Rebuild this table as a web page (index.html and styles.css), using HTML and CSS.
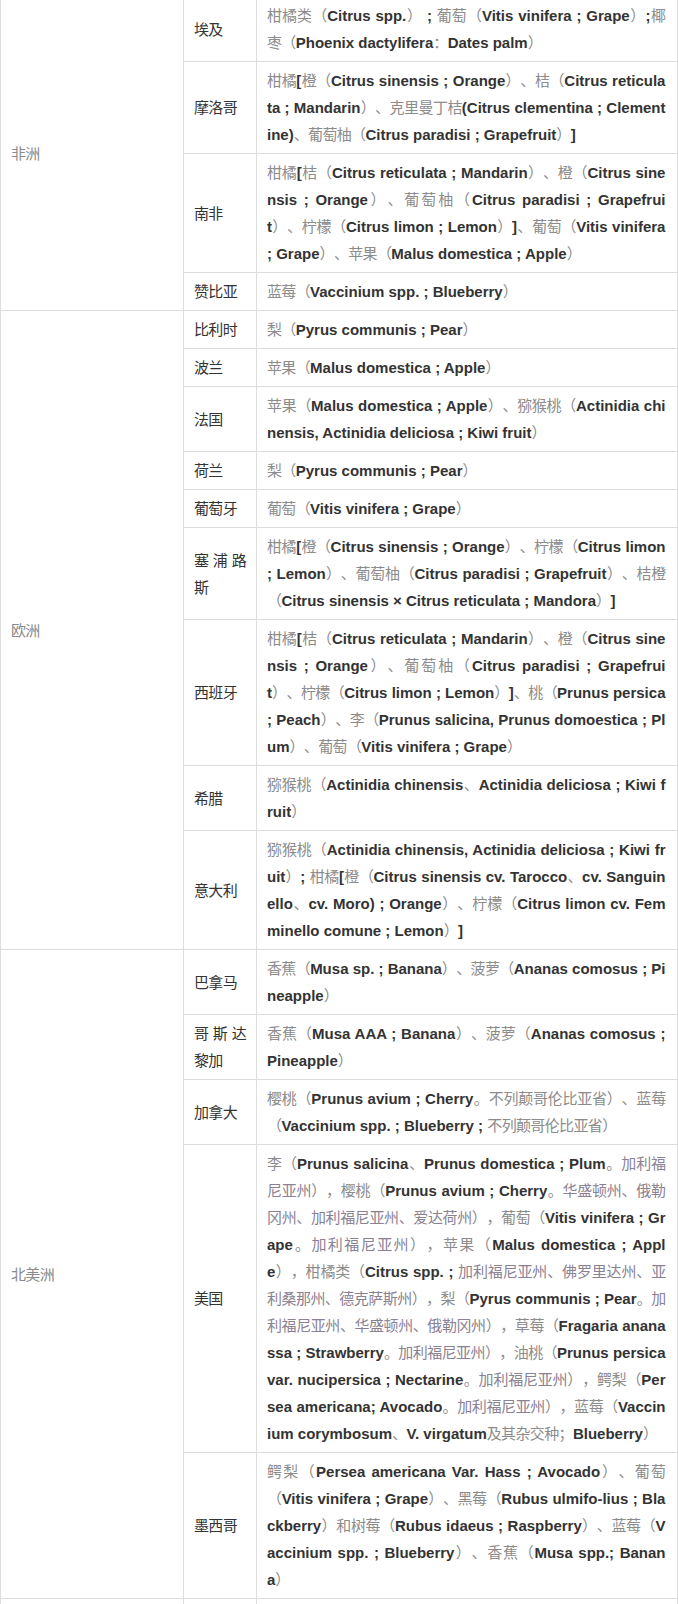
FILE: index.html
```html
<!DOCTYPE html>
<html lang="zh-CN">
<head>
<meta charset="utf-8">
<title>水果输华国家</title>
<link rel="stylesheet" href="styles.css">
</head>
<body>
<table class="fruit-table">
  <colgroup>
    <col class="col-continent">
    <col class="col-country">
    <col class="col-fruit">
  </colgroup>
  <tbody>
    <tr>
      <td class="continent" rowspan="4">非洲</td>
      <td class="country">埃及</td>
      <td class="fruit">柑橘类（<b>Citrus spp.</b>）<b> ; </b>葡萄（<b>Vitis vinifera ; Grape</b>）<b>;</b>椰枣（<b>Phoenix dactylifera</b>：<b>Dates palm</b>）</td>
    </tr>
    <tr>
      <td class="country">摩洛哥</td>
      <td class="fruit">柑橘<b>[</b>橙（<b>Citrus sinensis ; Orange</b>）、桔（<b>Citrus reticulata ; Mandarin</b>）、克里曼丁桔<b>(Citrus clementina ; Clementine)</b>、葡萄柚（<b>Citrus paradisi ; Grapefruit</b>）<b>]</b></td>
    </tr>
    <tr>
      <td class="country">南非</td>
      <td class="fruit">柑橘<b>[</b>桔（<b>Citrus reticulata ; Mandarin</b>）、橙（<b>Citrus sinensis ; Orange</b>）、葡萄柚（<b>Citrus paradisi ; Grapefruit</b>）、柠檬（<b>Citrus limon ; Lemon</b>）<b>]</b>、葡萄（<b>Vitis vinifera ; Grape</b>）、苹果（<b>Malus domestica ; Apple</b>）</td>
    </tr>
    <tr>
      <td class="country">赞比亚</td>
      <td class="fruit">蓝莓（<b>Vaccinium spp. ; Blueberry</b>）</td>
    </tr>

    <tr>
      <td class="continent" rowspan="9">欧洲</td>
      <td class="country">比利时</td>
      <td class="fruit">梨（<b>Pyrus communis ; Pear</b>）</td>
    </tr>
    <tr>
      <td class="country">波兰</td>
      <td class="fruit">苹果（<b>Malus domestica ; Apple</b>）</td>
    </tr>
    <tr>
      <td class="country">法国</td>
      <td class="fruit">苹果（<b>Malus domestica ; Apple</b>）、猕猴桃（<b>Actinidia chinensis, Actinidia deliciosa ; Kiwi fruit</b>）</td>
    </tr>
    <tr>
      <td class="country">荷兰</td>
      <td class="fruit">梨（<b>Pyrus communis ; Pear</b>）</td>
    </tr>
    <tr>
      <td class="country">葡萄牙</td>
      <td class="fruit">葡萄（<b>Vitis vinifera ; Grape</b>）</td>
    </tr>
    <tr>
      <td class="country">塞浦路斯</td>
      <td class="fruit">柑橘<b>[</b>橙（<b>Citrus sinensis ; Orange</b>）、柠檬（<b>Citrus limon ; Lemon</b>）、葡萄柚（<b>Citrus paradisi ; Grapefruit</b>）、桔橙（<b>Citrus sinensis × Citrus reticulata ; Mandora</b>）<b>]</b></td>
    </tr>
    <tr>
      <td class="country">西班牙</td>
      <td class="fruit">柑橘<b>[</b>桔（<b>Citrus reticulata ; Mandarin</b>）、橙（<b>Citrus sinensis ; Orange</b>）、葡萄柚（<b>Citrus paradisi ; Grapefruit</b>）、柠檬（<b>Citrus limon ; Lemon</b>）<b>]</b>、桃（<b>Prunus persica ; Peach</b>）、李（<b>Prunus salicina, Prunus domoestica ; Plum</b>）、葡萄（<b>Vitis vinifera ; Grape</b>）</td>
    </tr>
    <tr>
      <td class="country">希腊</td>
      <td class="fruit">猕猴桃（<b>Actinidia chinensis</b>、<b>Actinidia deliciosa ; Kiwi fruit</b>）</td>
    </tr>
    <tr>
      <td class="country">意大利</td>
      <td class="fruit">猕猴桃（<b>Actinidia chinensis, Actinidia deliciosa ; Kiwi fruit</b>）<b>; </b>柑橘<b>[</b>橙（<b>Citrus sinensis cv. Tarocco</b>、<b>cv. Sanguinello</b>、<b>cv. Moro) ; Orange</b>）、柠檬（<b>Citrus limon cv. Femminello comune ; Lemon</b>）<b>]</b></td>
    </tr>

    <tr>
      <td class="continent" rowspan="5">北美洲</td>
      <td class="country">巴拿马</td>
      <td class="fruit">香蕉（<b>Musa sp. ; Banana</b>）、菠萝（<b>Ananas comosus ; Pineapple</b>）</td>
    </tr>
    <tr>
      <td class="country">哥斯达黎加</td>
      <td class="fruit">香蕉（<b>Musa AAA ; Banana</b>）、菠萝（<b>Ananas comosus ; Pineapple</b>）</td>
    </tr>
    <tr>
      <td class="country">加拿大</td>
      <td class="fruit">樱桃（<b>Prunus avium ; Cherry</b>。不列颠哥伦比亚省）、蓝莓（<b>Vaccinium spp. ; Blueberry ; </b>不列颠哥伦比亚省）</td>
    </tr>
    <tr>
      <td class="country">美国</td>
      <td class="fruit">李（<b>Prunus salicina</b>、<b>Prunus domestica ; Plum</b>。<span class="region">加利福尼亚州</span>），樱桃（<b>Prunus avium ; Cherry</b>。<span class="region">华盛顿州、俄勒冈州、加利福尼亚州、爱达荷州</span>），葡萄（<b>Vitis vinifera ; Grape</b>。<span class="region">加利福尼亚州</span>），苹果（<b>Malus domestica ; Apple</b>），柑橘类（<b>Citrus spp. ; </b><span class="region">加利福尼亚州、佛罗里达州、亚利桑那州、德克萨斯州</span>），梨（<b>Pyrus communis ; Pear</b>。<span class="region">加利福尼亚州、华盛顿州、俄勒冈州</span>），草莓（<b>Fragaria ananassa ; Strawberry</b>。<span class="region">加利福尼亚州</span>），油桃（<b>Prunus persica var. nucipersica ; Nectarine</b>。<span class="region">加利福尼亚州</span>），鳄梨（<b>Persea americana; Avocado</b>。<span class="region">加利福尼亚州</span>），蓝莓（<b>Vaccinium corymbosum</b>、<b>V. virgatum</b>及其杂交种；<b>Blueberry</b>）</td>
    </tr>
    <tr>
      <td class="country">墨西哥</td>
      <td class="fruit">鳄梨（<b>Persea americana Var. Hass ; Avocado</b>）、葡萄（<b>Vitis vinifera ; Grape</b>）、黑莓（<b>Rubus ulmifo-lius ; Blackberry</b>）和树莓（<b>Rubus idaeus ; Raspberry</b>）、蓝莓（<b>Vaccinium spp. ; Blueberry</b>）、香蕉（<b>Musa spp.; Banana</b>）</td>
    </tr>

    <tr>
      <td class="continent">南美洲</td>
      <td class="country">阿根廷</td>
      <td class="fruit">柑橘类（<b>Citrus spp.</b>）、苹果（<b>Malus domestica ; Apple</b>）、梨（<b>Pyrus communis ; Pear</b>）</td>
    </tr>
  </tbody>
</table>
</body>
</html>
```

FILE: styles.css
```css
html, body {
  margin: 0;
  padding: 0;
  background: #ffffff;
}

body {
  font-family: "Liberation Sans", "Noto Sans CJK SC", sans-serif;
  font-size: 15px;
  color: #888888;
  text-spacing-trim: space-all;
}

.fruit-table {
  width: 677px;
  margin-top: -4px;
  border-collapse: collapse;
  table-layout: fixed;
}

.col-continent { width: 183px; }
.col-country { width: 73px; }
.col-fruit { width: 421px; }

.fruit-table td {
  border: 1px solid #dddddd;
  padding: 5px 10px;
  line-height: 27px;
  vertical-align: middle;
  word-break: break-all;
  text-align: justify;
  letter-spacing: -0.64px;
}

.fruit-table td.fruit {
  padding-right: 11.5px;
}

.continent {
  color: #8a8a8a;
}

.country {
  color: #333333;
}

.fruit {
  color: #8c8c8c;
}

.fruit b {
  font-weight: bold;
  color: #333333;
  letter-spacing: 0;
}

.region {
  color: #8a8294;
}
```
